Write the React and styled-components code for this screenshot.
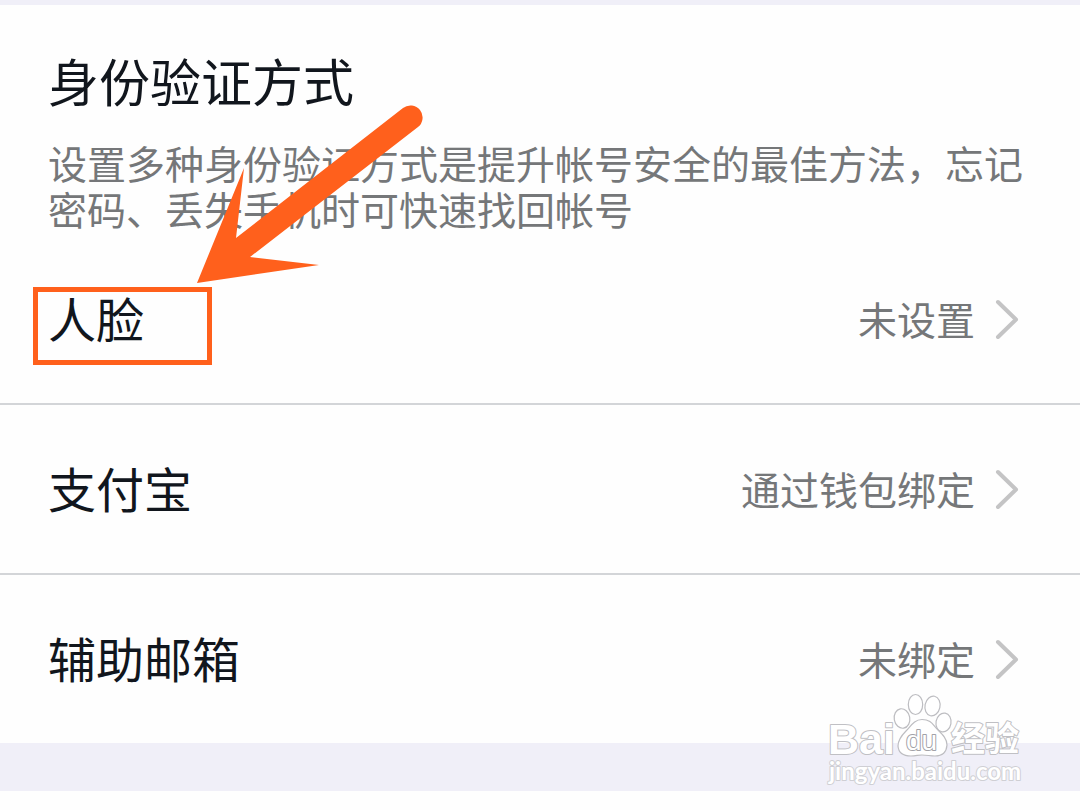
import React from "react";
import styled, { createGlobalStyle } from "styled-components";

const GlobalStyle = createGlobalStyle`
  * {
    box-sizing: border-box;
  }

  body {
    margin: 0;
    background: #fefefe;
    font-family: "Noto Sans CJK SC", sans-serif;
  }
`;

const PageStyled = styled.main`
  border-top: 5px solid #f0eff8;
`;

const SectionStyled = styled.section`
  position: relative;
`;

const IntroStyled = styled.header`
  padding: 44px 48px 4px;
`;

const TitleStyled = styled.h1`
  margin: 0 0 28px;
  font-size: 51px;
  font-weight: 400;
  line-height: 62px;
  color: #11161d;
`;

const DescriptionStyled = styled.p`
  margin: 0;
  font-size: 39px;
  line-height: 46px;
  color: #757779;
`;

const ListStyled = styled.ul`
  margin: 0;
  padding: 0;
  list-style: none;
`;

const ItemStyled = styled.li`
  & + & {
    border-top: 2px solid #d3d5d8;
  }
`;

const RowStyled = styled.button`
  display: flex;
  align-items: center;
  width: 100%;
  height: 168px;
  padding: 0 61px 0 48px;
  border: 0;
  background: none;
  font-family: inherit;
  text-align: left;
  cursor: pointer;
`;

const LabelStyled = styled.span`
  position: relative;
  flex: 1;
  padding-bottom: 4px;
  font-size: 48px;
  line-height: 60px;
  color: #11161d;
`;

const ValueStyled = styled.span`
  margin-right: 20px;
  padding-bottom: 2px;
  font-size: 39px;
  line-height: 60px;
  color: #757779;
`;

const HighlightStyled = styled.span`
  position: absolute;
  top: 0;
  left: -15px;
  width: 179px;
  height: 78px;
  border: 5px solid #ff601c;
`;

const ArrowStyled = styled.svg`
  position: absolute;
  top: 95px;
  left: 190px;
  pointer-events: none;
`;

const BandStyled = styled.footer`
  position: relative;
  height: 48px;
  background: #f0eff8;
`;

const WatermarkStyled = styled.svg`
  position: absolute;
  right: 50px;
  bottom: 0;
`;

const WatermarkTextStyled = styled.text`
  fill: #fff;
  stroke: ${({ $stroke }) => $stroke || "#c0c0c4"};
  stroke-width: 2px;
  stroke-linejoin: round;
  paint-order: stroke;
  font-family: ${({ $family }) => $family}, "Noto Sans CJK SC", sans-serif;
  font-size: ${({ $size }) => $size}px;
  font-weight: ${({ $weight }) => $weight || 700};
`;

const methods = [
  { key: "face", name: "人脸", value: "未设置", highlighted: true },
  { key: "alipay", name: "支付宝", value: "通过钱包绑定" },
  { key: "email", name: "辅助邮箱", value: "未绑定" },
];

const Chevron = () => (
  <svg width="24" height="40" viewBox="0 0 24 40" fill="none" aria-hidden="true">
    <path d="M3 3L21 20.500L3 38" stroke="#c4c4c5" strokeWidth="4" strokeLinecap="round" strokeLinejoin="round" />
  </svg>
);

const Arrow = () => (
  <ArrowStyled width="240" height="190" viewBox="190 100 240 190" aria-hidden="true">
    <path
      d="M197 283L244 168L236 238L403 108A11.500 11.500 0 0 1 418 127L250 257L319 265Z"
      fill="#ff601c"
    />
  </ArrowStyled>
);

const Watermark = () => (
  <WatermarkStyled width="210" height="104" viewBox="820 687 210 104">
    <WatermarkTextStyled x="828" y="754" $size={43} $family="Liberation Sans">Bai</WatermarkTextStyled>
    <g fill="#fff" stroke="#bdbdc1" strokeWidth="1.200">
      <ellipse cx="902" cy="718.500" rx="7.800" ry="9.800" transform="rotate(-10 902 718.500)" />
      <ellipse cx="915.500" cy="704.500" rx="7.200" ry="10" />
      <ellipse cx="932.500" cy="706" rx="7.500" ry="10" transform="rotate(12 932.500 706)" />
      <ellipse cx="943.500" cy="722.500" rx="7.500" ry="9.500" transform="rotate(10 943.500 722.500)" />
      <path d="M922 719.500C914 719.500 911 726 906 731C901 736 898 740 898 746C898.500 753 904 756 911 756C916 756 918 755 922 755C927 755 930 756 935 756C942 756 946.500 752 947 745C947 739 943 735 938 730C933 725 931 719.500 922 719.500Z" />
    </g>
    <WatermarkTextStyled x="906" y="750" $size={28} $weight={400} $stroke="#a2a2a7" $family="Liberation Sans">du</WatermarkTextStyled>
    <WatermarkTextStyled x="951" y="751" $size={34} $family="Liberation Sans">经验</WatermarkTextStyled>
    <WatermarkTextStyled x="829" y="780" $size={24} $stroke="#cfcfd4" $family="Lato">jingyan.baidu.com</WatermarkTextStyled>
  </WatermarkStyled>
);

const App = () => (
  <PageStyled>
    <GlobalStyle />
    <SectionStyled>
      <IntroStyled>
        <TitleStyled>身份验证方式</TitleStyled>
        <DescriptionStyled>
          设置多种身份验证方式是提升帐号安全的最佳方法，忘记密码、丢失手机时可快速找回帐号
        </DescriptionStyled>
      </IntroStyled>
      <ListStyled>
        {methods.map(({ key, name, value, highlighted }) =>
          <ItemStyled key={key}>
            <RowStyled type="button">
              <LabelStyled>
                {name}
                {highlighted && <HighlightStyled />}
              </LabelStyled>
              <ValueStyled>{value}</ValueStyled>
              <Chevron />
            </RowStyled>
          </ItemStyled>
        )}
      </ListStyled>
      <Arrow />
    </SectionStyled>
    <BandStyled>
      <Watermark />
    </BandStyled>
  </PageStyled>
);

export default App;
